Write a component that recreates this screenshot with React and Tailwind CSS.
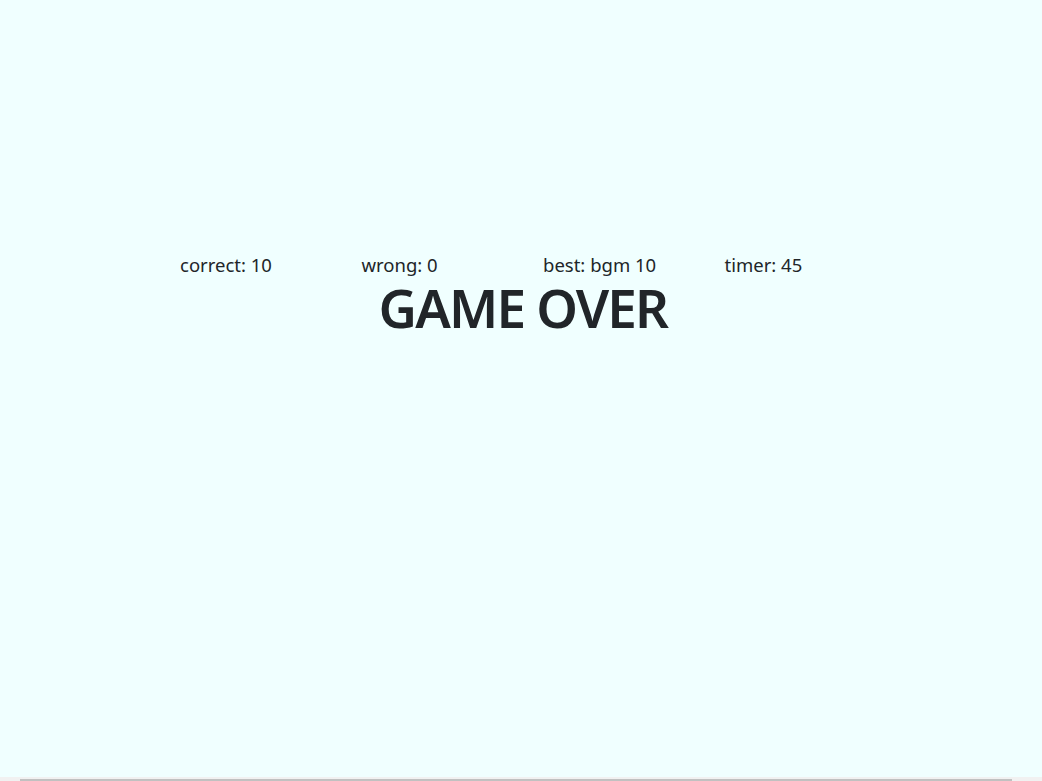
import React from 'react';

const stats = [
    { label: 'correct', value: '10' },
    { label: 'wrong', value: '0' },
    { label: 'best', value: 'bgm 10' },
    { label: 'timer', value: '45' },
];

const App = () => {
    return (
        <div className="h-[781px] flex flex-col bg-[#f0ffff] text-[#212529] font-['Noto_Sans','Open_Sans',sans-serif] overflow-hidden">
            <div className="flex-1">
                <div className="flex pl-[180px] pt-[254px]">
                    {stats.map((s) => (
                        <div key={s.label} className="w-[181.5px] text-[18.5px] leading-[22px]">
                            {s.label}: {s.value}
                        </div>
                    ))}
                </div>
                <h1 className="text-center text-[53px] font-semibold leading-[46px] mt-[9px] tracking-[-1.8px] pl-[4px]">GAME OVER</h1>
            </div>

            {/* bottom scrollbar strip */}
            <div className="h-[4px] bg-[#f1f1f1] pt-[2px]">
                <div className="ml-[20px] w-[992px] h-[2px] bg-[#c1c1c1]" />
            </div>
        </div>
    );
};

export default App;
